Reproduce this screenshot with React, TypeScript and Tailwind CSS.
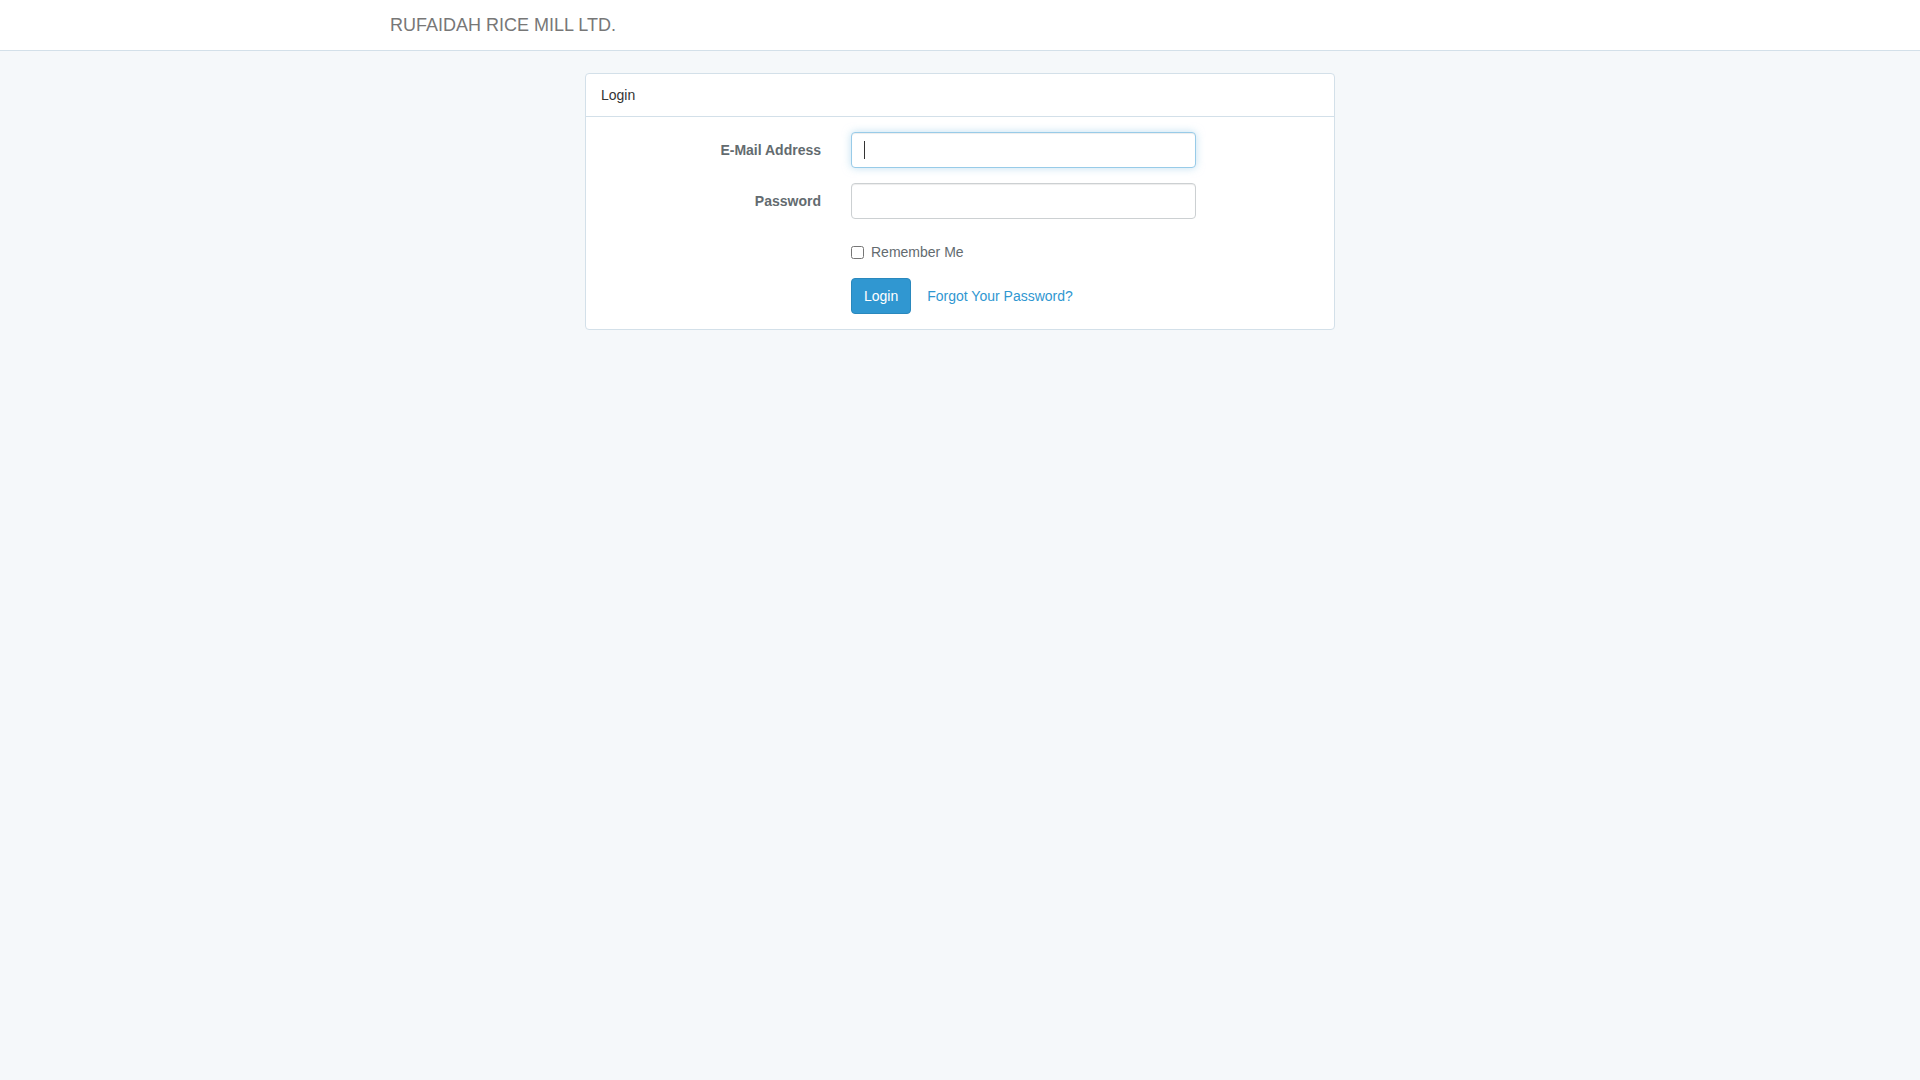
export default function App() {
  return (
    <div className="min-h-screen bg-[#f5f8fa] text-[14px] leading-[22px] text-[#636b6f]" style={{ fontFamily: '"Liberation Sans", Arial, sans-serif' }}>
      <nav className="h-[51px] border-b border-[#d3e0e9] bg-white">
        <div className="mx-auto w-[1170px] px-[15px]">
          <a className="block h-[50px] py-[14px] text-[18px] leading-[22px] text-[#777]">RUFAIDAH RICE MILL LTD.</a>
        </div>
      </nav>
      <div className="mx-auto mt-[22px] w-[1170px] px-[15px]">
        <div className="ml-[195px] w-[750px] rounded-[4px] border border-[#d3e0e9] bg-white">
          <div className="border-b border-[#d3e0e9] px-[15px] py-[10px] text-[#333]">Login</div>
          <div className="p-[15px]">
            <div className="-mx-[15px] mb-[15px] flex">
              <label className="w-[250px] px-[15px] pt-[7px] text-right font-bold">E-Mail Address</label>
              <div className="w-[375px] px-[15px]">
                <div className="flex h-[36px] items-center rounded-[4px] border border-[#98cbe8] bg-white px-[12px] shadow-[inset_0_1px_1px_rgba(0,0,0,0.075),0_0_8px_rgba(152,203,232,0.6)]">
                  <span className="h-[18px] w-px bg-[#333]" />
                </div>
              </div>
            </div>
            <div className="-mx-[15px] mb-[15px] flex">
              <label className="w-[250px] px-[15px] pt-[7px] text-right font-bold">Password</label>
              <div className="w-[375px] px-[15px]">
                <div className="h-[36px] rounded-[4px] border border-[#ccd0d2] bg-white shadow-[inset_0_1px_1px_rgba(0,0,0,0.075)]" />
              </div>
            </div>
            <div className="-mx-[15px] mb-[15px] flex">
              <div className="ml-[250px] px-[15px] pt-[7px]">
                <label className="flex items-center gap-[7px]">
                  <input type="checkbox" className="h-[13px] w-[13px]" />
                  Remember Me
                </label>
              </div>
            </div>
            <div className="-mx-[15px] flex">
              <div className="ml-[250px] flex items-center px-[15px]">
                <button className="h-[36px] rounded-[4px] border border-[#2a88bd] bg-[#3097d1] px-[12px] text-white">Login</button>
                <a className="ml-[16px] text-[#3097d1]">Forgot Your Password?</a>
              </div>
            </div>
          </div>
        </div>
      </div>
    </div>
  );
}
